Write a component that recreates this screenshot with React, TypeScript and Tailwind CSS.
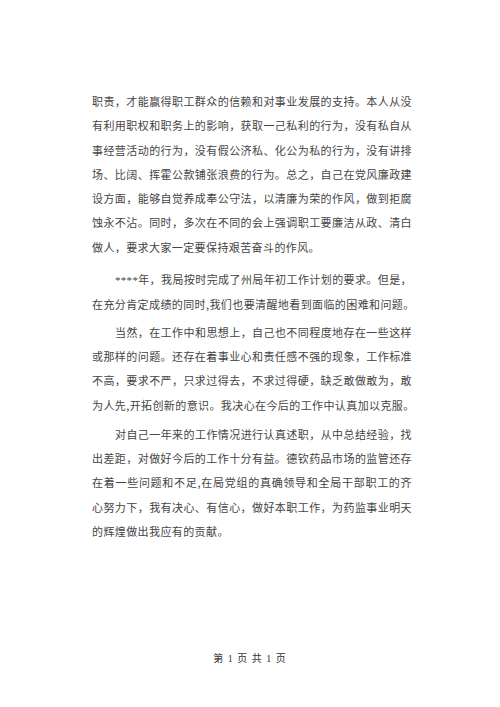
const paragraphs: { indent: boolean; gap: string; lines: string[] }[] = [
  {
    indent: false,
    gap: '',
    lines: [
      '职责，才能赢得职工群众的信赖和对事业发展的支持。本人从没',
      '有利用职权和职务上的影响，获取一己私利的行为，没有私自从',
      '事经营活动的行为，没有假公济私、化公为私的行为，没有讲排',
      '场、比阔、挥霍公款铺张浪费的行为。总之，自己在党风廉政建',
      '设方面，能够自觉养成奉公守法，以清廉为荣的作风，做到拒腐',
      '蚀永不沾。同时，多次在不同的会上强调职工要廉洁从政、清白',
      '做人，要求大家一定要保持艰苦奋斗的作风。',
    ],
  },
  {
    indent: true,
    gap: 'mt-[8px]',
    lines: [
      '****年，我局按时完成了州局年初工作计划的要求。但是，',
      '在充分肯定成绩的同时,我们也要清醒地看到面临的困难和问题。',
    ],
  },
  {
    indent: true,
    gap: 'mt-[3px]',
    lines: [
      '当然，在工作中和思想上，自己也不同程度地存在一些这样',
      '或那样的问题。还存在着事业心和责任感不强的现象，工作标准',
      '不高，要求不严，只求过得去，不求过得硬，缺乏敢做敢为，敢',
      '为人先,开拓创新的意识。我决心在今后的工作中认真加以克服。',
    ],
  },
  {
    indent: true,
    gap: 'mt-[5px]',
    lines: [
      '对自己一年来的工作情况进行认真述职，从中总结经验，找',
      '出差距，对做好今后的工作十分有益。德钦药品市场的监管还存',
      '在着一些问题和不足,在局党组的真确领导和全局干部职工的齐',
      '心努力下，我有决心、有信心，做好本职工作，为药监事业明天',
      '的辉煌做出我应有的贡献。',
    ],
  },
];

function Line({ text, first, indent, last }: { text: string; first: boolean; indent: boolean; last: boolean }) {
  const stars = text.startsWith('****');
  const body = stars ? text.slice(4) : text;
  return (
    <div
      className={
        'whitespace-nowrap ' +
        (last ? 'text-left' : 'text-justify [text-align-last:justify]') +
        (first && indent ? ' pl-[23px]' : '')
      }
    >
      {stars && (
        <span className="font-['Liberation_Serif',serif] text-[11px] tracking-[0.3px]">****</span>
      )}
      {body}
    </div>
  );
}

export default function App() {
  return (
    <div className="w-[500px] h-[707px] bg-white flex flex-col font-['Noto_Sans_CJK_SC',sans-serif] text-[#444]">
      <div className="pt-[89px] pl-[92px] w-[412px] flex flex-col text-[11px] tracking-[0.4px] leading-[24.3px]">
        {paragraphs.map((p, i) => (
          <div key={i} className={p.gap}>
            {p.lines.map((l, j) => (
              <Line key={j} text={l} first={j === 0} indent={p.indent} last={j === p.lines.length - 1 && l.length < 26} />
            ))}
          </div>
        ))}
      </div>
      <div className="mt-auto pb-[42px] text-center text-[10px] tracking-[1px] leading-[12px] text-[#333] font-['Liberation_Serif','Noto_Sans_CJK_SC',serif]">
        第 1 页 共 1 页
      </div>
    </div>
  );
}
